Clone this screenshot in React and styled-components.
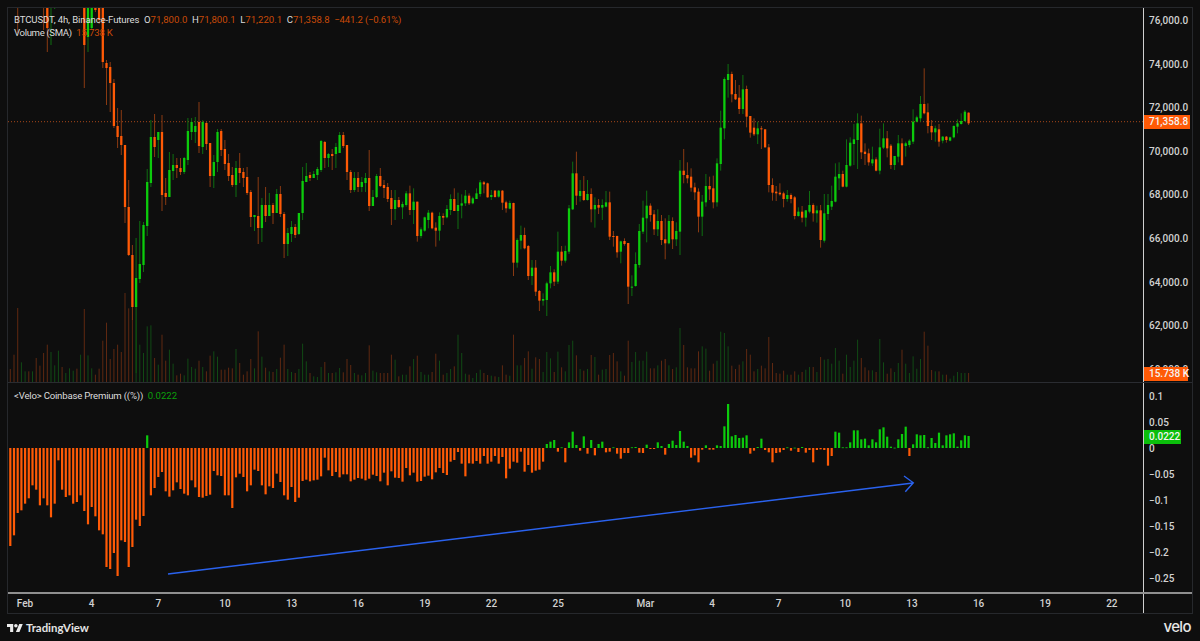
import React from 'react';
import styled, { createGlobalStyle } from 'styled-components';

const GlobalStyle = createGlobalStyle`
  html, body {
    margin: 0;
    padding: 0;
    background: #0e0e0e;
  }
  body {
    font-family: Roboto, "Liberation Sans", sans-serif;
    color: #d4d4d4;
  }
`;

const Page = styled.div`
  width: 1200px;
  height: 641px;
  padding: 7px 7px 0 7px;
  box-sizing: border-box;
  overflow: hidden;
  display: flex;
  flex-direction: column;
  background: #0e0e0e;
`;

const Frame = styled.div`
  width: 1186px;
  border: 1px solid #26282c;
  box-sizing: border-box;
  display: flex;
  flex-direction: column;
`;

const PaneRow = styled.div`
  display: grid;
  grid-template-columns: 1135px 49px;
  height: ${(p) => p.$height}px;
  border-bottom: ${(p) => p.$rule || 'none'};
  box-sizing: content-box;
`;

const Pane = styled.div`
  position: relative;
  overflow: hidden;
`;

const ChartSvg = styled.svg`
  display: block;
  width: 100%;
  height: 100%;
`;

const Scale = styled.div`
  position: relative;
  border-left: 1px solid #cfcfcf;
  overflow: hidden;
  display: flex;
  flex-direction: column;
`;

const ScaleList = styled.div`
  display: flex;
  flex-direction: column;
  margin-top: ${(p) => p.$shift}px;
`;

const ScaleTick = styled.div`
  height: ${(p) => p.$step}px;
  flex: none;
  line-height: ${(p) => p.$step}px;
  padding-left: 5px;
  font-size: 10px;
  font-weight: 500;
  color: #d2d2d2;
  white-space: nowrap;
`;

const Badge = styled.div`
  position: absolute;
  left: 0;
  top: ${(p) => p.$top}px;
  width: ${(p) => p.$width}px;
  height: 13.5px;
  line-height: 13.5px;
  padding-left: 5px;
  box-sizing: border-box;
  background: ${(p) => p.$bg};
  color: #f4f4f4;
  font-size: 10px;
  font-weight: 500;
  white-space: nowrap;
`;

const Legend = styled.div`
  position: absolute;
  left: 6px;
  top: ${(p) => p.$top}px;
  display: flex;
  flex-direction: column;
  gap: 2px;
  font-size: 9.6px;
  line-height: 11px;
  color: #dcdcdc;
  white-space: nowrap;
`;

const LegendLine = styled.div`
  display: flex;
  gap: 4.6px;
`;

const Title = styled.span`
  letter-spacing: ${(p) => p.$tight || -0.12}px;
`;

const Ohlc = styled.span`
  color: #dcdcdc;
`;

const Val = styled.span`
  color: ${(p) => p.$color || '#c94a08'};
  letter-spacing: ${(p) => p.$tight || 0}px;
`;

const TimeAxis = styled.div`
  display: flex;
  height: 19px;
  align-items: center;
`;

const TimeTick = styled.span`
  flex: none;
  width: 66.65px;
  margin-left: ${(p) => p.$gap || 0}px;
  text-align: center;
  font-size: 10px;
  font-weight: 500;
  color: #d2d2d2;
`;

const Footer = styled.div`
  display: flex;
  align-items: center;
  justify-content: space-between;
  height: 27px;
  width: 1184px;
`;

const Brand = styled.div`
  display: flex;
  align-items: center;
  gap: 3px;
`;

const BrandName = styled.span`
  font-family: Lato, "Noto Sans", sans-serif;
  font-size: 11.4px;
  font-weight: 700;
  color: #e4e4e4;
`;

const VeloMark = styled.span`
  font-family: Inter, "Noto Sans", sans-serif;
  font-size: 15px;
  font-weight: 500;
  letter-spacing: -0.6px;
  color: #e6e6e6;
  margin-top: -2px;
`;

const GREEN = '#0ccb0c';
const ORANGE = '#ff5a06';
const GREEN_WICK = '#0e6f10';
const ORANGE_WICK = '#8a3a12';
const GREEN_VOL = '#114a14';
const ORANGE_VOL = '#5f2811';
const BLUE = '#2a62ee';

const barX = (i) => 10.3 + 3.7 * i;

// first bars are mostly above the visible range, so only their colour matters
const hidden = (c) => [0, 0, 0, 0, c];

// page pixel coordinates: high, body top, body bottom, low, colour
const firstBars = [
  hidden('o'), hidden('o'), [0, 0, 0, 33, 'o'], hidden('g'), hidden('g'), hidden('o'), hidden('g'), hidden('o'), hidden('o'), [0, 0, 0, 30, 'o'],
  [0, 0, 28, 52, 'o'], [0, 0, 8, 45, 'g'], [0, 0, 0, 9, 'g'], hidden('g'), hidden('o'), hidden('g'), hidden('g'), hidden('g'), hidden('o'), hidden('g'),
  [0, 0, 45, 88, 'o'], [0, 0, 37, 52, 'g'], [0, 0, 28, 30, 'g'], [0, 0, 10, 12, 'o'], [0, 0, 20, 24, 'o'], [0, 0, 62, 68, 'o'],
  [60, 63, 68, 105, 'o'], [62, 67, 83, 112, 'o'], [79, 83, 126, 128, 'o'], [108, 126, 137, 148, 'o'], [110, 136, 145, 155, 'o'],
  [145, 145, 207, 223, 'o'], [180, 207, 255, 256, 'o'], [245, 255, 307, 320, 'o'], [238, 278, 307, 373, 'g'], [221, 264, 279, 283, 'g'],
  [222, 225, 265, 272, 'g'], [169, 182, 226, 236, 'g'], [120, 137, 183, 187, 'g'], [114, 137, 147, 157, 'o'], [132, 132, 140, 158, 'g'],
  [115, 132, 195, 211, 'o'], [178, 193, 197, 205, 'o'], [152, 170, 197, 197, 'g'], [154, 165, 171, 180, 'g'], [158, 165, 168, 178, 'o'],
  [158, 168, 172, 175, 'o'], [157, 158, 172, 174, 'g'], [118, 131, 160, 165, 'g'], [118, 122, 132, 140, 'g'], [117, 126, 132, 143, 'g'],
  [102, 122, 146, 153, 'o'], [120, 122, 147, 154, 'g'], [122, 123, 144, 150, 'o'], [143, 143, 176, 187, 'o'], [155, 162, 176, 188, 'g'],
  [129, 132, 162, 172, 'g'], [129, 131, 150, 156, 'o'], [140, 149, 164, 170, 'o'], [154, 163, 176, 181, 'o'], [167, 175, 185, 187, 'o'],
  [161, 168, 185, 197, 'g'], [153, 168, 173, 183, 'o'], [168, 172, 178, 187, 'o'], [167, 177, 193, 195, 'o'], [190, 192, 217, 227, 'o'],
  [215, 215, 217, 231, 'g'], [177, 216, 228, 244, 'o'], [198, 205, 228, 242, 'g'], [187, 205, 216, 222, 'o'], [193, 205, 216, 216, 'g'],
  [203, 205, 213, 224, 'o'], [189, 194, 213, 213, 'g'], [186, 194, 214, 217, 'o'], [212, 214, 244, 258, 'o'], [228, 233, 244, 256, 'g'],
  [221, 227, 234, 242, 'g'], [224, 227, 235, 238, 'o'], [213, 213, 234, 235, 'g'], [167, 181, 213, 220, 'g'], [163, 176, 182, 182, 'g'],
  [172, 175, 178, 181, 'o'], [171, 174, 178, 178, 'g'], [167, 169, 175, 180, 'g'], [140, 141, 170, 172, 'g'], [141, 142, 158, 168, 'o'],
  [153, 154, 158, 167, 'g'], [149, 154, 156, 170, 'o'], [143, 147, 154, 168, 'g'], [132, 135, 153, 153, 'g'], [132, 135, 146, 148, 'o'],
  [145, 145, 172, 180, 'o'], [170, 172, 190, 193, 'o'], [172, 178, 190, 192, 'g'], [172, 178, 187, 192, 'o'], [177, 182, 187, 192, 'g'],
  [173, 178, 183, 192, 'g'], [150, 178, 206, 211, 'o'], [190, 197, 206, 206, 'g'], [174, 176, 197, 198, 'g'], [168, 176, 186, 187, 'o'],
  [180, 185, 188, 198, 'o'], [183, 187, 199, 202, 'o'], [190, 198, 209, 225, 'o'], [190, 200, 209, 220, 'g'], [197, 200, 207, 208, 'o'],
];

// measured at 3x from y=50, converted below
const laterBars = [
  [455, 462, 472, 507, 'g'], [423, 430, 465, 470, 'g'], [407, 430, 480, 495, 'o'], [415, 455, 480, 522, 'g'], [455, 455, 558, 575, 'o'],
  [532, 538, 558, 565, 'g'], [500, 502, 542, 545, 'g'], [480, 488, 510, 535, 'g'], [485, 488, 535, 538, 'o'], [517, 533, 542, 590, 'o'],
  [487, 498, 542, 572, 'g'], [490, 498, 503, 525, 'o'], [465, 477, 502, 505, 'g'], [433, 447, 480, 495, 'g'], [415, 447, 483, 483, 'o'],
  [428, 465, 483, 537, 'g'], [433, 460, 467, 505, 'g'], [420, 437, 460, 468, 'g'], [430, 437, 460, 465, 'o'], [440, 445, 460, 463, 'g'],
  [415, 430, 447, 447, 'g'], [390, 397, 432, 440, 'g'], [393, 397, 403, 430, 'o'], [398, 400, 442, 443, 'o'], [420, 435, 441, 450, 'g'],
  [420, 422, 441, 443, 'o'], [420, 422, 440, 443, 'g'], [420, 422, 458, 480, 'o'], [452, 457, 475, 488, 'o'], [452, 459, 476, 478, 'g'],
  [458, 459, 638, 678, 'o'], [565, 570, 638, 653, 'g'], [527, 555, 572, 598, 'g'], [533, 555, 595, 598, 'o'], [585, 588, 678, 690, 'o'],
  [630, 653, 678, 705, 'g'], [630, 653, 725, 738, 'o'], [720, 723, 752, 783, 'o'], [730, 747, 752, 767, 'g'], [695, 700, 750, 798, 'g'],
  [648, 667, 700, 715, 'g'], [658, 667, 695, 708, 'o'], [545, 605, 695, 702, 'g'], [588, 605, 632, 647, 'o'], [587, 603, 632, 638, 'g'],
  [465, 475, 605, 612, 'g'], [335, 370, 478, 480, 'g'], [305, 370, 437, 465, 'o'], [390, 423, 438, 455, 'g'], [378, 423, 450, 453, 'o'],
  [390, 432, 450, 452, 'g'], [415, 432, 478, 517, 'o'], [442, 465, 478, 533, 'g'], [447, 465, 473, 492, 'o'], [448, 465, 473, 510, 'g'],
  [423, 457, 470, 472, 'g'], [425, 457, 560, 570, 'o'], [543, 558, 560, 590, 'o'], [557, 558, 607, 623, 'o'], [572, 574, 605, 640, 'g'],
  [565, 573, 582, 587, 'o'], [579, 579, 710, 762, 'o'], [676, 710, 710, 738, 'g'], [607, 642, 708, 710, 'g'], [522, 543, 645, 653, 'g'],
  [452, 503, 545, 552, 'g'], [422, 467, 505, 577, 'g'], [460, 467, 495, 515, 'o'], [480, 493, 538, 555, 'o'], [478, 513, 538, 558, 'g'],
  [495, 513, 570, 585, 'o'], [505, 568, 580, 628, 'o'], [495, 513, 580, 583, 'g'], [502, 513, 568, 597, 'o'], [517, 543, 568, 588, 'g'],
  [330, 362, 545, 615, 'g'], [297, 362, 375, 400, 'o'], [337, 375, 385, 400, 'o'], [355, 380, 413, 425, 'o'], [398, 412, 427, 450, 'o'],
  [415, 425, 500, 547, 'o'], [435, 455, 500, 558, 'g'], [372, 408, 457, 470, 'g'], [380, 408, 418, 450, 'o'], [377, 415, 457, 475, 'o'],
  [325, 340, 457, 470, 'g'], [182, 233, 342, 362, 'g'], [82, 87, 235, 268, 'g'], [42, 72, 90, 143, 'g'], [65, 72, 133, 157, 'o'],
  [90, 132, 148, 150, 'o'], [105, 143, 177, 192, 'o'], [75, 118, 177, 192, 'g'], [107, 117, 200, 232, 'o'], [198, 198, 248, 263, 'o'],
  [205, 233, 253, 258, 'o'], [215, 235, 253, 282, 'g'], [228, 235, 237, 297, 'o'], [237, 238, 292, 293, 'o'], [282, 292, 405, 427, 'o'],
  [385, 405, 428, 452, 'o'], [408, 425, 430, 453, 'o'], [400, 428, 433, 437, 'o'], [425, 430, 447, 472, 'o'], [420, 435, 447, 455, 'g'],
  [430, 435, 447, 460, 'o'], [438, 442, 498, 508, 'o'], [472, 485, 498, 500, 'g'],
  [468, 485, 503, 517, 'o'], [480, 481, 503, 530, 'g'], [423, 465, 485, 490, 'g'], [460, 465, 490, 515, 'o'], [467, 481, 490, 518, 'g'],
  [465, 481, 570, 593, 'o'], [432, 490, 572, 578, 'g'], [432, 465, 492, 510, 'g'], [407, 453, 470, 480, 'g'], [340, 380, 455, 457, 'g'],
  [337, 372, 385, 420, 'g'], [362, 372, 410, 412, 'o'], [268, 345, 410, 412, 'g'], [262, 278, 347, 350, 'g'], [222, 268, 282, 345, 'g'],
  [190, 220, 270, 357, 'g'], [197, 220, 307, 327, 'o'], [280, 305, 312, 345, 'o'], [296, 310, 337, 347, 'o'], [290, 328, 340, 348, 'g'],
  [322, 328, 362, 364, 'o'], [236, 292, 362, 373, 'g'], [220, 265, 293, 297, 'g'], [243, 265, 295, 322, 'o'], [282, 287, 345, 357, 'o'],
  [318, 318, 345, 360, 'g'], [255, 280, 320, 337, 'g'], [265, 280, 345, 348, 'o'], [275, 280, 288, 320, 'g'], [268, 272, 285, 292, 'g'],
  [178, 215, 275, 282, 'g'], [197, 202, 215, 217, 'g'], [138, 162, 205, 215, 'g'], [55, 162, 190, 193, 'o'], [160, 187, 228, 250, 'o'],
  [210, 228, 247, 270, 'o'], [227, 235, 247, 275, 'g'], [222, 238, 275, 290, 'o'], [258, 260, 272, 280, 'g'], [258, 260, 270, 278, 'o'],
  [260, 262, 272, 274, 'g'], [226, 228, 262, 265, 'g'], [208, 220, 230, 250, 'g'], [190, 213, 222, 224, 'g'], [180, 185, 213, 215, 'g'],
  [187, 188, 220, 225, 'o'],
].map(([a, b, c, d, color]) => [50 + a / 3, 50 + b / 3, 50 + c / 3, 50 + d / 3, color]);

const candles = [...firstBars, ...laterBars];

const volumeA = [
  658, 615, 475, 638, 665, 665, 665, 625, 648, 610, 585, 607, 647, 603, 652, 670, 656, 663, 657, 615,
  478, 617, 656, 675, 657, 573, 519, 628, 598, 585, 607, 430, 476, 510, 670, 585, 610, 530, 527, 625,
  645, 555, 633, 600, 642, 677, 672, 677, 627, 652, 657, 633, 652, 665, 618, 605, 621, 660, 660, 654,
  656, 598, 640, 675, 665, 628, 656, 545, 621, 654, 665, 667, 658, 624, 585, 658, 667, 670, 658, 582,
  635, 670, 680, 682, 652, 637, 670, 670, 668, 655, 668, 628, 646, 670, 675, 677, 670, 587, 663, 668,
  670, 670, 670, 615, 630, 680,
].map((v) => (697 - v) / 3);

const volumeB = [
  165, 165, 140, 118, 108, 157, 165, 165, 157, 102, 123, 165, 160, 148, 140, 45, 100, 162, 165, 175,
  160, 150, 160, 166, 168, 170, 172, 137, 165, 168, 45, 137, 137, 115, 95, 147, 113, 118, 157, 97,
  116, 157, 96, 143, 155, 76, 63, 107, 148, 153, 148, 106, 112, 165, 150, 148, 106, 100, 125, 155,
  168, 63, 127, 97, 123, 123, 96, 146, 146, 137, 123, 118, 137, 148, 143, 25, 76, 143, 146, 146,
  95, 80, 87, 153, 132, 123, 36, 40, 80, 138, 148, 135, 125, 88, 105, 155, 148, 138, 146, 52,
  130, 160, 162, 153, 165, 165, 155, 165,
  157, 150, 142, 142, 157, 112, 120, 118, 132, 85, 123, 162, 105, 142, 123, 60, 115, 143, 152, 152,
  157, 58, 128, 162, 146, 157, 130, 90, 132, 160, 110, 147, 118, 36, 78, 151, 155, 155, 165, 165,
  177, 168, 157, 160, 160, 160,
].map((v) => (187 - v) / 3);

const volumes = [...volumeA, ...volumeB];

const premiumA = [
  497, 465, 398, 390, 370, 354, 315, 328, 375, 354, 375, 411, 370, 240, 328, 350, 345, 370, 365, 345,
  392, 432, 380, 408, 450, 462, 560, 566, 518, 587, 480, 485, 560, 500, 418, 437, 407, 165, 345, 323,
  290, 275, 333, 349, 330, 306, 326, 340, 345, 300, 321, 350, 352, 347, 343, 272, 285, 287, 345, 345,
  383, 291, 280, 290, 333, 315, 268, 272, 315, 342, 318, 323, 280, 305, 345, 358, 320, 365, 352, 302,
  298, 303, 300, 298, 288, 232, 270, 287, 275, 291, 282, 282, 303, 298, 293, 295, 300, 295, 283, 287,
  303, 277, 315, 273, 292, 293,
].map((v) => (v - 203) / 3);

const premiumB = [
  485, 444, 466, 458, 485, 483, 470, 467, 478, 457, 444, 459, 465, 425, 420, 396, 431, 469, 430, 431,
  423, 431, 408, 431, 425, 408, 431, 411, 475, 446, 425, 428, 395, 455, 435, 458, 452, 449, 425, 372,
  365, 360, 395, 382, 427, 367, 335, 375, 392, 349, 401, 360, 406, 372, 365, 397, 395, 382, 401, 416,
  399, 399, 382, 381, 398, 399, 374, 387, 387, 367, 378, 404, 372, 362, 375, 333, 365, 378, 413, 406,
  427, 389, 376, 389, 389, 376, 378, 319, 252, 349, 345, 354, 353, 346, 401, 392, 381, 356, 390, 397,
  427, 399, 397, 390, 382, 392, 383, 396,
  381, 398, 390, 427, 390, 388, 390, 437, 408, 335, 338, 382, 382, 367, 331, 331, 358, 356, 376, 358,
  367, 328, 322, 350, 380, 383, 358, 342, 320, 408, 373, 343, 346, 345, 382, 354, 369, 338, 376, 346,
  343, 340, 380, 361, 346, 348,
].map((v) => (v - 384) / 3);

const premium = [...premiumA, ...premiumB];

const prices = ['76,000.0', '74,000.0', '72,000.0', '70,000.0', '68,000.0', '66,000.0', '64,000.0', '62,000.0', '60,000.0'];
const premiumTicks = ['0.1', '0.05', '0', '−0.05', '−0.1', '−0.15', '−0.2', '−0.25'];
const dates = [
  { label: 'Feb', gap: -16.3 }, { label: '4' }, { label: '7' }, { label: '10' }, { label: '13' }, { label: '16' }, { label: '19' }, { label: '22' }, { label: '25' },
  { label: 'Mar', gap: 20.6 }, { label: '4' }, { label: '7' }, { label: '10' }, { label: '13' }, { label: '16' }, { label: '19' }, { label: '22' },
];

function PriceChart() {
  return (
    <ChartSvg viewBox="8 8 1135 374">
      {volumes.map((h, i) => (
        <rect
          key={i}
          x={barX(i) - 0.5}
          y={382 - h}
          width={1}
          height={h}
          fill={candles[i][4] === 'g' ? GREEN_VOL : ORANGE_VOL}
        />
      ))}
      <line x1="8" y1="121.7" x2="1143" y2="121.7" stroke="#a8481a" strokeWidth="1" strokeDasharray="1 2" />
      {candles.map(([high, top, bottom, low, color], i) => {
        const x = barX(i);
        return (
          <g key={i}>
            <line x1={x} y1={high} x2={x} y2={low} stroke={color === 'g' ? GREEN_WICK : ORANGE_WICK} strokeWidth="1" />
            <rect x={x - 1.15} y={top} width={2.3} height={Math.max(bottom - top, 1)} fill={color === 'g' ? GREEN : ORANGE} />
          </g>
        );
      })}
    </ChartSvg>
  );
}

function PremiumChart() {
  return (
    <ChartSvg viewBox="8 383 1135 209">
      {premium.map((v, i) => (
        <rect
          key={i}
          x={barX(i) - 1.1}
          y={v < 0 ? 448 + v : 448}
          width={2.2}
          height={Math.max(Math.abs(v), 0.8)}
          fill={v < 0 ? GREEN : ORANGE}
        />
      ))}
      <path d="M168 574L913 483M904 476L913.3 482.8L905.3 491.7" fill="none" stroke={BLUE} strokeWidth="1.4" />
    </ChartSvg>
  );
}

function TvLogo() {
  return (
    <svg width="16" height="8" viewBox="0 4 36 18" fill="#ececec">
      <path d="M14 22H7V11H0V4h14v18zM28 22h-8l7.5-18h8L28 22z" />
      <circle cx="20" cy="8" r="4" />
    </svg>
  );
}

export default function App() {
  return (
    <>
      <GlobalStyle />
      <Page>
        <Frame>
          <PaneRow $height={374} $rule="1px solid #2a2c31">
            <Pane>
              <PriceChart />
              <Legend $top={6}>
                <LegendLine>
                  <Title>BTCUSDT, 4h, Binance-Futures</Title>
                  <span><Ohlc>O</Ohlc><Val>71,800.0</Val></span>
                  <span><Ohlc>H</Ohlc><Val>71,800.1</Val></span>
                  <span><Ohlc>L</Ohlc><Val>71,220.1</Val></span>
                  <span><Ohlc>C</Ohlc><Val>71,358.8</Val></span>
                  <Val $tight={-0.2}>−441.2 (−0.61%)</Val>
                </LegendLine>
                <LegendLine>
                  <Title $tight={-0.35}>Volume (SMA)</Title>
                  <Val $tight={-0.2}>15.738 K</Val>
                </LegendLine>
              </Legend>
            </Pane>
            <Scale>
              <ScaleList $shift={-9}>
                {prices.map((p) => (
                  <ScaleTick key={p} $step={43.6}>{p}</ScaleTick>
                ))}
              </ScaleList>
              <Badge $top={107} $width={46} $bg="#ff5a06">71,358.8</Badge>
              <Badge $top={359} $width={44} $bg="#ff5a06">15.738 K</Badge>
            </Scale>
          </PaneRow>
          <PaneRow $height={209} $rule="2px solid #8f8f8f">
            <Pane>
              <PremiumChart />
              <Legend $top={7}>
                <LegendLine>
                  <Title $tight={-0.2}>&lt;Velo&gt; Coinbase Premium ((%))</Title>
                  <Val $color="#0b9f0b">0.0222</Val>
                </LegendLine>
              </Legend>
            </Pane>
            <Scale>
              <ScaleList $shift={1}>
                {premiumTicks.map((p) => (
                  <ScaleTick key={p} $step={26}>{p}</ScaleTick>
                ))}
              </ScaleList>
              <Badge $top={47} $width={37} $bg="#0bbf0b">0.0222</Badge>
            </Scale>
          </PaneRow>
          <PaneRow $height={19}>
            <TimeAxis>
              {dates.map((d, i) => (
                <TimeTick key={i} $gap={d.gap}>{d.label}</TimeTick>
              ))}
            </TimeAxis>
            <Scale />
          </PaneRow>
        </Frame>
        <Footer>
          <Brand>
            <TvLogo />
            <BrandName>TradingView</BrandName>
          </Brand>
          <VeloMark>velo</VeloMark>
        </Footer>
      </Page>
    </>
  );
}
